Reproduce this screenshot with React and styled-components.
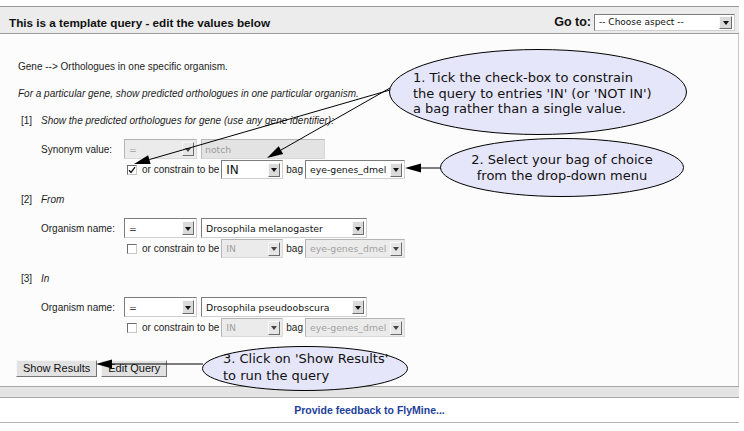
import React from 'react';
import styled, { createGlobalStyle } from 'styled-components';

const GlobalStyle = createGlobalStyle`
  html, body { margin: 0; padding: 0; background: #ffffff; }
  body { font-family: "Liberation Sans", Arial, sans-serif; color: #1c1c1c; }
  #root { width: 744px; height: 431px; overflow: hidden; }
`;

const Page = styled.div`
  position: relative;
  width: 739px;
  padding-top: 6px;
`;

const Header = styled.div`
  box-sizing: border-box;
  display: flex;
  align-items: center;
  justify-content: space-between;
  height: 28px;
  padding: 4px 4px 0 9px;
  background: #ececec;
  border-top: 1px solid #9a9a9a;
  border-bottom: 1px solid #9a9a9a;
`;

const Title = styled.h1`
  margin: 0;
  font-size: 11.7px;
  font-weight: bold;
  color: #111;
`;

const GoTo = styled.div`
  display: flex;
  align-items: center;
  gap: 3px;
`;

const GoToLabel = styled.span`
  font-size: 12.5px;
  font-weight: bold;
  color: #111;
`;

const Content = styled.div`
  box-sizing: border-box;
  height: 352px;
  padding: 27px 0 0 16px;
  background: #fcfcfc;
  border-right: 1px solid #c8c8c8;
`;

const Text = styled.p`
  margin: ${p => p.$mt || 0}px 0 0 2px;
  font-size: 10px;
  line-height: 12px;
  font-style: ${p => (p.$italic ? 'italic' : 'normal')};
  color: #1c1c1c;
`;

const Section = styled.div`
  margin-top: 15px;
`;

const SectionHeading = styled.div`
  display: flex;
  padding-left: 5px;
  font-size: 10px;
  line-height: 12px;
`;

const Num = styled.span`
  width: 20px;
`;

const Caption = styled.span`
  font-style: italic;
`;

const FieldGrid = styled.div`
  display: grid;
  grid-template-columns: 83px auto;
  row-gap: 1px;
  margin: 12px 0 0 25px;
  align-items: center;
`;

const FieldLabel = styled.span`
  font-size: 10px;
`;

const Row = styled.div`
  display: flex;
  align-items: center;
  height: ${p => p.$h}px;
  grid-column: ${p => (p.$second ? '2' : 'auto')};
`;

const Gap = styled.span`
  flex: none;
  width: ${p => p.$w}px;
`;

const SmallLabel = styled.span`
  font-size: 10px;
  white-space: nowrap;
`;

const SelectBox = styled.div`
  box-sizing: border-box;
  display: flex;
  align-items: center;
  flex: none;
  width: ${p => p.$w}px;
  height: ${p => p.$h}px;
  padding: 0 2px 0 ${p => p.$pl}px;
  background: ${p => (p.$disabled ? '#ebebeb' : '#ffffff')};
  border: 1px solid;
  border-color: ${p => (p.$disabled ? '#b4b4b4 #dadada #dadada #b4b4b4' : '#7c7c7c #cfcfcf #cfcfcf #7c7c7c')};
  font-family: "DejaVu Sans", "Liberation Sans", sans-serif;
  font-size: ${p => p.$fs}px;
  color: ${p => (p.$disabled ? '#a2a2a2' : '#111111')};
  white-space: nowrap;
`;

const SelectText = styled.span`
  flex: 1;
  overflow: hidden;
`;

const DropButton = styled.span`
  box-sizing: border-box;
  display: flex;
  align-items: center;
  justify-content: center;
  flex: none;
  width: ${p => p.$bw}px;
  height: ${p => p.$bh}px;
  background: ${p => (p.$disabled ? '#e6e6e6' : '#dadada')};
  border: 1px solid;
  border-color: #fafafa #6c6c6c #6c6c6c #fafafa;
`;

const Caret = styled.span`
  width: 0;
  height: 0;
  border-left: 3px solid transparent;
  border-right: 3px solid transparent;
  border-top: 4px solid ${p => (p.$disabled ? '#444' : '#111')};
  margin-top: 1px;
`;

const TextInput = styled.div`
  box-sizing: border-box;
  display: flex;
  align-items: center;
  width: ${p => p.$w}px;
  height: 20px;
  padding-left: 3px;
  background: #e3e3e3;
  border: 1px solid;
  border-color: #b8b8b8 #d8d8d8 #d8d8d8 #b8b8b8;
  font-family: "DejaVu Sans", sans-serif;
  font-size: 9.3px;
  color: #9c9c9c;
`;

const CheckBox = styled.span`
  box-sizing: border-box;
  display: flex;
  align-items: center;
  justify-content: center;
  flex: none;
  width: 10px;
  height: 10px;
  margin-left: 3px;
  background: #ffffff;
  border: 1px solid;
  border-color: #6c6c6c #c8c8c8 #c8c8c8 #6c6c6c;
`;

const Buttons = styled.div`
  display: flex;
  gap: 4px;
  margin-top: 23px;
`;

const Button = styled.button`
  box-sizing: border-box;
  height: 17px;
  padding: 0 6px;
  font-family: "Liberation Sans", Arial, sans-serif;
  font-size: 11px;
  color: #111;
  background: #e2e2e2;
  border: 1px solid;
  border-color: #f6f6f6 #767676 #767676 #f6f6f6;
  line-height: 13px;
`;

const Band = styled.div`
  height: 10px;
  background: #e4e4e4;
  border-top: 1px solid #a8a8a8;
  border-bottom: 1px solid #a8a8a8;
`;

const Footer = styled.div`
  display: flex;
  align-items: center;
  justify-content: center;
  height: 24px;
  border-bottom: 1px solid #b4b4b4;
`;

const FooterLink = styled.a`
  font-size: 10.5px;
  font-weight: bold;
  color: #1d3e9a;
  text-decoration: none;
`;

const Overlay = styled.svg`
  position: absolute;
  left: 0;
  top: 0;
  width: 744px;
  height: 431px;
  pointer-events: none;
`;

const Callout = styled.div`
  position: absolute;
  box-sizing: border-box;
  left: ${p => p.$x}px;
  top: ${p => p.$y}px;
  width: ${p => p.$w}px;
  height: ${p => p.$h}px;
  padding: ${p => p.$pad};
  font-family: "DejaVu Sans", sans-serif;
  font-size: 13px;
  line-height: ${p => p.$lh}px;
  color: #111;
  text-align: ${p => p.$align};
  white-space: nowrap;
`;

const CalloutShape = styled.svg`
  position: absolute;
  left: 0;
  top: 0;
  z-index: 0;
`;

const CalloutText = styled.div`
  position: relative;
  z-index: 1;
`;

function Select({ w, h = 20, value, disabled, fs = 9.3, pl = 4, bw = 12, bh = 14 }) {
  return (
    <SelectBox $w={w} $h={h} $disabled={disabled} $fs={fs} $pl={pl}>
      <SelectText>{value}</SelectText>
      <DropButton $bw={bw} $bh={bh} $disabled={disabled}>
        <Caret $disabled={disabled} />
      </DropButton>
    </SelectBox>
  );
}

function Check({ checked }) {
  return (
    <CheckBox>
      {checked && (
        <svg width="8" height="8" viewBox="0 0 8 8">
          <path d="M1 4.2 L3 6.4 L7 1.2" fill="none" stroke="#111" strokeWidth="1.3" />
        </svg>
      )}
    </CheckBox>
  );
}

function ConstraintRow({ checked }) {
  const off = !checked;
  return (
    <Row $h={19} $second>
      <Check checked={checked} />
      <Gap $w={5} />
      <SmallLabel>or constrain to be</SmallLabel>
      <Gap $w={2} />
      <Select w={62} h={19} value="IN" disabled={off} fs={checked ? 12 : 9.3} />
      <Gap $w={3} />
      <SmallLabel>bag</SmallLabel>
      <Gap $w={2} />
      <Select w={100} h={19} value="eye-genes_dmel" disabled={off} />
    </Row>
  );
}

function Arrow({ x1, y1, x2, y2, len = 16, half = 4.5 }) {
  const dx = x2 - x1;
  const dy = y2 - y1;
  const d = Math.hypot(dx, dy);
  const ux = dx / d;
  const uy = dy / d;
  const bx = x2 - ux * len;
  const by = y2 - uy * len;
  const px = -uy * half;
  const py = ux * half;
  return (
    <g>
      <line x1={x1} y1={y1} x2={bx} y2={by} stroke="#000" strokeWidth="1" />
      <polygon
        points={`${x2},${y2} ${bx + px},${by + py} ${bx - px},${by - py}`}
        fill="#000"
      />
    </g>
  );
}

function Bubble({ x, y, w, h, pad, lh, align = 'left', lines }) {
  return (
    <Callout $x={x} $y={y} $w={w} $h={h} $pad={pad} $lh={lh} $align={align}>
      <CalloutShape width={w} height={h}>
        <ellipse cx={w / 2} cy={h / 2} rx={w / 2 - 0.5} ry={h / 2 - 0.5} fill="#e6e6fa" stroke="#000" strokeWidth="1" />
      </CalloutShape>
      <CalloutText>
        {lines.map(l => (
          <div key={l}>{l}</div>
        ))}
      </CalloutText>
    </Callout>
  );
}

export default function App() {
  return (
    <>
      <GlobalStyle />
      <Page>
        <Header>
          <Title>This is a template query - edit the values below</Title>
          <GoTo>
            <GoToLabel>Go to:</GoToLabel>
            <Select w={141} h={17} value="-- Choose aspect --" fs={9} pl={4} bw={13} bh={13} />
          </GoTo>
        </Header>
        <Content>
          <Text>Gene --&gt; Orthologues in one specific organism.</Text>
          <Text $mt={15} $italic>
            For a particular gene, show predicted orthologues in one particular organism.
          </Text>

          <Section>
            <SectionHeading>
              <Num>[1]</Num>
              <Caption>Show the predicted orthologues for gene (use any gene identifier):</Caption>
            </SectionHeading>
            <FieldGrid>
              <FieldLabel>Synonym value:</FieldLabel>
              <Row $h={20}>
                <Select w={73} value="=" disabled />
                <Gap $w={4} />
                <TextInput $w={124}>notch</TextInput>
              </Row>
              <ConstraintRow checked />
            </FieldGrid>
          </Section>

          <Section>
            <SectionHeading>
              <Num>[2]</Num>
              <Caption>From</Caption>
            </SectionHeading>
            <FieldGrid>
              <FieldLabel>Organism name:</FieldLabel>
              <Row $h={20}>
                <Select w={73} value="=" />
                <Gap $w={4} />
                <Select w={166} value="Drosophila melanogaster" />
              </Row>
              <ConstraintRow />
            </FieldGrid>
          </Section>

          <Section>
            <SectionHeading>
              <Num>[3]</Num>
              <Caption>In</Caption>
            </SectionHeading>
            <FieldGrid>
              <FieldLabel>Organism name:</FieldLabel>
              <Row $h={20}>
                <Select w={73} value="=" />
                <Gap $w={4} />
                <Select w={166} value="Drosophila pseudoobscura" />
              </Row>
              <ConstraintRow />
            </FieldGrid>
          </Section>

          <Buttons>
            <Button>Show Results</Button>
            <Button>Edit Query</Button>
          </Buttons>
        </Content>
        <Band />
        <Footer>
          <FooterLink href="#">Provide feedback to FlyMine...</FooterLink>
        </Footer>

        <Overlay viewBox="0 0 744 431">
          <Arrow x1={390} y1={90} x2={134} y2={164} />
          <Arrow x1={390} y1={88} x2={267} y2={158} />
          <Arrow x1={441} y1={168} x2={405} y2={168} />
          <Arrow x1={203} y1={364} x2={96} y2={364} />
        </Overlay>

        <Bubble
          x={389}
          y={49}
          w={298}
          h={86}
          pad="21px 0 0 24px"
          lh={15.5}
          lines={[
            '1. Tick the check-box to constrain',
            "the query to entries 'IN' (or 'NOT IN')",
            'a bag rather than a single value.',
          ]}
        />
        <Bubble
          x={440}
          y={138}
          w={244}
          h={59}
          pad="14px 0 0 0"
          lh={16}
          align="center"
          lines={['2. Select your bag of choice', 'from the drop-down menu']}
        />
        <Bubble
          x={202}
          y={346}
          w={206}
          h={45}
          pad="4px 0 0 21px"
          lh={17}
          lines={["3. Click on 'Show Results'", 'to run the query']}
        />
      </Page>
    </>
  );
}
